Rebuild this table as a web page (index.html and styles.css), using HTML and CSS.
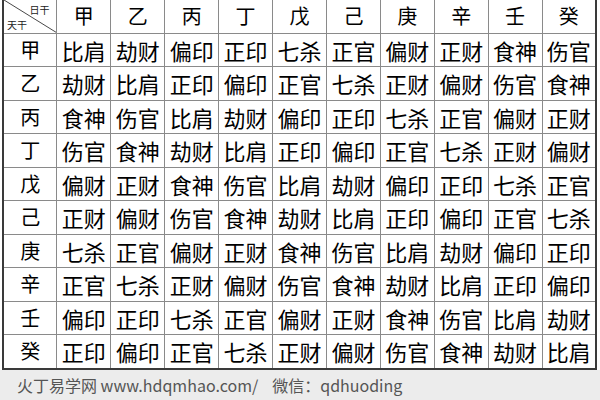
FILE: index.html
```html
<!DOCTYPE html>
<html lang="zh">
<head>
<meta charset="utf-8">
<link rel="stylesheet" href="styles.css">
</head>
<body>
<div class="page">
<table class="grid">
<colgroup><col><col><col><col><col><col><col><col><col><col><col></colgroup>
<tr class="head">
<th class="corner"><svg class="diag" viewBox="0 0 54 33" preserveAspectRatio="none"><line x1="0" y1="0" x2="54" y2="33"/></svg><span class="rigan">日干</span><span class="tiangan">天干</span></th>
<th>甲</th><th>乙</th><th>丙</th><th>丁</th><th>戊</th><th>己</th><th>庚</th><th>辛</th><th>壬</th><th>癸</th>
</tr>
<tr><th>甲</th><td>比肩</td><td>劫财</td><td>偏印</td><td>正印</td><td>七杀</td><td>正官</td><td>偏财</td><td>正财</td><td>食神</td><td>伤官</td></tr>
<tr><th>乙</th><td>劫财</td><td>比肩</td><td>正印</td><td>偏印</td><td>正官</td><td>七杀</td><td>正财</td><td>偏财</td><td>伤官</td><td>食神</td></tr>
<tr><th>丙</th><td>食神</td><td>伤官</td><td>比肩</td><td>劫财</td><td>偏印</td><td>正印</td><td>七杀</td><td>正官</td><td>偏财</td><td>正财</td></tr>
<tr><th>丁</th><td>伤官</td><td>食神</td><td>劫财</td><td>比肩</td><td>正印</td><td>偏印</td><td>正官</td><td>七杀</td><td>正财</td><td>偏财</td></tr>
<tr><th>戊</th><td>偏财</td><td>正财</td><td>食神</td><td>伤官</td><td>比肩</td><td>劫财</td><td>偏印</td><td>正印</td><td>七杀</td><td>正官</td></tr>
<tr><th>己</th><td>正财</td><td>偏财</td><td>伤官</td><td>食神</td><td>劫财</td><td>比肩</td><td>正印</td><td>偏印</td><td>正官</td><td>七杀</td></tr>
<tr><th>庚</th><td>七杀</td><td>正官</td><td>偏财</td><td>正财</td><td>食神</td><td>伤官</td><td>比肩</td><td>劫财</td><td>偏印</td><td>正印</td></tr>
<tr><th>辛</th><td>正官</td><td>七杀</td><td>正财</td><td>偏财</td><td>伤官</td><td>食神</td><td>劫财</td><td>比肩</td><td>正印</td><td>偏印</td></tr>
<tr><th>壬</th><td>偏印</td><td>正印</td><td>七杀</td><td>正官</td><td>偏财</td><td>正财</td><td>食神</td><td>伤官</td><td>比肩</td><td>劫财</td></tr>
<tr><th>癸</th><td>正印</td><td>偏印</td><td>正官</td><td>七杀</td><td>正财</td><td>偏财</td><td>伤官</td><td>食神</td><td>劫财</td><td>比肩</td></tr>
</table>
<div class="footer"><span class="site">火丁易学网 www.hdqmhao.com/</span><span class="wx">微信：qdhuoding</span></div>
</div>
</body>
</html>
```
FILE: styles.css
```css
html, body {
  margin: 0;
  padding: 0;
  background: #ffffff;
}
.page {
  width: 600px;
  height: 400px;
  display: flex;
  flex-direction: column;
  overflow: hidden;
  font-family: "Noto Sans CJK SC", "Noto Sans", sans-serif;
}
.grid {
  margin-left: 2px;
  width: 595px;
  table-layout: fixed;
  border-collapse: collapse;
  border: 2px solid #3a3a3a;
  border-top: none;
  flex: none;
}
.grid th, .grid td {
  height: 32.5px;
  padding: 0;
  border: 1px solid #8a8a8a;
  text-align: center;
  vertical-align: middle;
  font-weight: normal;
  color: #000;
  font-size: 22px;
  line-height: 24px;
  white-space: nowrap;
  letter-spacing: 0;
}
.grid th {
  font-size: 20px;
}
.grid tr:first-child th {
  border-top: none;
}
.corner {
  position: relative;
}
.diag {
  position: absolute;
  left: 0;
  top: 0;
  width: 100%;
  height: 100%;
}
.diag line {
  stroke: #444;
  stroke-width: 1;
}
.rigan, .tiangan {
  position: absolute;
  font-size: 10px;
  line-height: 10px;
  letter-spacing: 0;
  color: #222;
}
.rigan {
  right: 7px;
  top: 5px;
}
.tiangan {
  left: 3px;
  bottom: 3px;
}
.footer {
  flex: 1;
  background: #ececec;
  padding: 5px 0 0 17px;
  font-size: 16px;
  line-height: 20px;
  color: #555;
  font-family: "Noto Sans CJK SC", sans-serif;
  display: flex;
  gap: 14px;
}
```
